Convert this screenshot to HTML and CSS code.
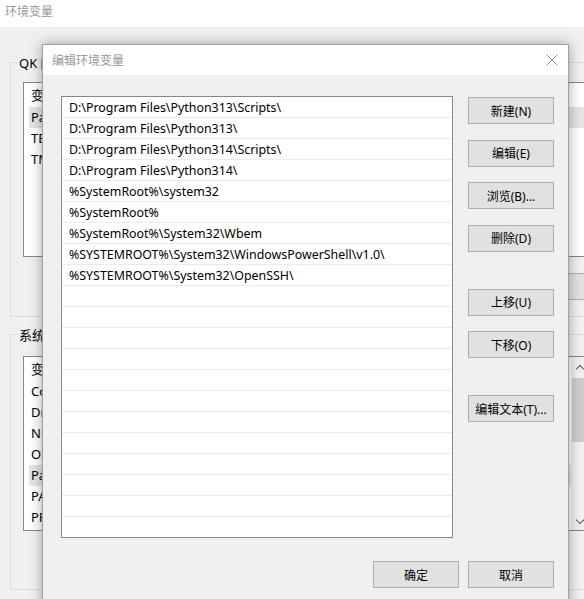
FILE: index.html
```html
<!DOCTYPE html>
<html lang="zh-CN">
<head>
    <meta charset="UTF-8">
    <title>编辑环境变量</title>
    <link rel="stylesheet" href="styles.css">
</head>
<body>
    <!-- 后面的“环境变量”窗口 -->
    <div class="window">
        <div class="window-title">环境变量</div>
        <div class="window-body">
            <fieldset class="group group-user">
                <legend>QK 的用户变量(U)</legend>
                <div class="var-list">
                    <div class="var-head">变量</div>
                    <div class="var-row selected">Path</div>
                    <div class="var-row">TEMP</div>
                    <div class="var-row">TMP</div>
                </div>
                <div class="side-buttons">
                    <span class="side-btn"></span>
                </div>
            </fieldset>
            <fieldset class="group group-system">
                <legend>系统变量(S)</legend>
                <div class="var-list var-list-system">
                    <div class="var-head">变量</div>
                    <div class="var-row">ComSpec</div>
                    <div class="var-row">DriverData</div>
                    <div class="var-row">NUMBER_OF_PROCESSORS</div>
                    <div class="var-row">OS</div>
                    <div class="var-row selected">Path</div>
                    <div class="var-row">PATHEXT</div>
                    <div class="var-row">PROCESSOR_ARCHITECTURE</div>
                    <div class="scrollbar">
                        <span class="arrow up"></span>
                        <span class="thumb"></span>
                        <span class="arrow down"></span>
                    </div>
                </div>
            </fieldset>
        </div>
    </div>

    <!-- “编辑环境变量”对话框 -->
    <div class="dialog">
        <div class="dialog-title">
            <span>编辑环境变量</span>
            <svg class="close" width="12" height="12" viewBox="0 0 12 12">
                <path d="M0.5 0.5 L11.5 11.5 M11.5 0.5 L0.5 11.5" stroke="#8c8c8c" stroke-width="1" fill="none"/>
            </svg>
        </div>
        <div class="dialog-body">
            <div class="dialog-main">
                <ul class="path-list">
                    <li>D:\Program Files\Python313\Scripts\</li>
                    <li>D:\Program Files\Python313\</li>
                    <li>D:\Program Files\Python314\Scripts\</li>
                    <li>D:\Program Files\Python314\</li>
                    <li>%SystemRoot%\system32</li>
                    <li>%SystemRoot%</li>
                    <li>%SystemRoot%\System32\Wbem</li>
                    <li>%SYSTEMROOT%\System32\WindowsPowerShell\v1.0\</li>
                    <li>%SYSTEMROOT%\System32\OpenSSH\</li>
                    <li></li><li></li><li></li><li></li><li></li><li></li>
                    <li></li><li></li><li></li><li></li><li></li><li></li>
                </ul>
                <div class="actions">
                    <button class="btn">新建(<u>N</u>)</button>
                    <button class="btn">编辑(<u>E</u>)</button>
                    <button class="btn">浏览(<u>B</u>)...</button>
                    <button class="btn">删除(<u>D</u>)</button>
                    <button class="btn spaced">上移(<u>U</u>)</button>
                    <button class="btn">下移(<u>O</u>)</button>
                    <button class="btn spaced">编辑文本(<u>T</u>)...</button>
                </div>
            </div>
            <div class="dialog-footer">
                <button class="btn">确定</button>
                <button class="btn">取消</button>
            </div>
        </div>
    </div>
</body>
</html>
```

FILE: styles.css
```css
body {
    margin: 0;
    width: 584px;
    height: 599px;
    overflow: hidden;
    background-color: #f0f0f0;
    font-family: "Noto Sans", "Noto Sans CJK SC", sans-serif;
    font-size: 12px;
    color: #000000;
    position: relative;
}

u {
    text-decoration: none;
}

/* 背景窗口 */
.window {
    width: 584px;
    overflow: hidden;
}

.window-title {
    height: 27px;
    line-height: 23px;
    padding-left: 5px;
    background: #ffffff;
    color: #999999;
    font-size: 12px;
}

.window-body {
    padding: 27px 0 0 10px;
}

.group {
    margin: 0;
    padding: 0 0 0 12px;
    border: 1px solid #dcdcdc;
    border-right: none;
    width: 700px;
    box-sizing: border-box;
}

.group legend {
    margin-left: -6px;
    padding: 0 2px;
    font-size: 13px;
}

.group-user {
    height: 264px;
    margin-top: -1px;
}

.group-system {
    height: 265px;
    margin-top: 8px;
}

.var-list {
    position: relative;
    width: 566px;
    height: 175px;
    margin-top: 10px;
    background: #ffffff;
    border: 1px solid #828790;
    box-sizing: border-box;
    font-size: 13px;
}

.group-system .var-list {
    margin-top: 12px;
}

.var-head {
    height: 24px;
    line-height: 24px;
    padding-left: 7px;
}

.var-row {
    height: 21px;
    line-height: 21px;
    margin-left: 5px;
    padding-left: 2px;
}

.var-row.selected {
    background: #e5e5e5;
}

.side-buttons {
    padding: 16px 0 0 536px;
}

.side-btn {
    display: block;
    width: 60px;
    height: 27px;
    background: #e1e1e1;
    border: 1px solid #adadad;
    box-sizing: border-box;
}

.scrollbar {
    position: absolute;
    top: 0;
    right: 0;
    bottom: 0;
    width: 17px;
    background: #f0f0f0;
    display: flex;
    flex-direction: column;
    align-items: center;
}

.scrollbar .thumb {
    width: 15px;
    height: 64px;
    margin-top: 6px;
    background: #cdcdcd;
}

.scrollbar .arrow {
    width: 5px;
    height: 5px;
    border-left: 1.5px solid #606060;
    border-top: 1.5px solid #606060;
}

.scrollbar .up {
    margin-top: 9px;
    transform: rotate(45deg);
}

.scrollbar .down {
    margin-top: auto;
    margin-bottom: 7px;
    transform: rotate(225deg);
}

/* 对话框 */
.dialog {
    position: absolute;
    left: 42px;
    top: 44px;
    width: 527px;
    height: 570px;
    background: #f0f0f0;
    border: 1px solid #a0a0a0;
    box-sizing: border-box;
    box-shadow: 0 0 12px rgba(0, 0, 0, 0.35);
}

.dialog-title {
    height: 30px;
    background: #ffffff;
    display: flex;
    align-items: center;
    justify-content: space-between;
    padding: 0 10px 0 9px;
    color: #999999;
}

.close {
    margin-top: -1px;
}

.dialog-body {
    padding: 21px 14px 0 18px;
}

.dialog-main {
    display: flex;
    align-items: flex-start;
}

.path-list {
    list-style: none;
    margin: 0;
    padding: 0;
    width: 392px;
    height: 442px;
    background: #ffffff;
    border: 1px solid #828790;
    box-sizing: border-box;
    overflow: hidden;
    font-size: 12.4px;
}

.path-list li {
    height: 21px;
    padding: 2px 0 0 7px;
    line-height: 18px;
    border-bottom: 1px solid #ebebeb;
    box-sizing: border-box;
    white-space: nowrap;
}

.actions {
    display: flex;
    flex-direction: column;
    gap: 15.5px;
    margin-left: 15px;
    padding-top: 1px;
}

.btn {
    width: 86px;
    height: 27px;
    padding: 0;
    background: #e1e1e1;
    border: 1px solid #adadad;
    font-family: inherit;
    font-size: 12px;
    color: #000000;
}

.actions .spaced {
    margin-top: 21.5px;
}

.dialog-footer {
    display: flex;
    justify-content: flex-end;
    gap: 9px;
    margin-top: 23px;
}
```
